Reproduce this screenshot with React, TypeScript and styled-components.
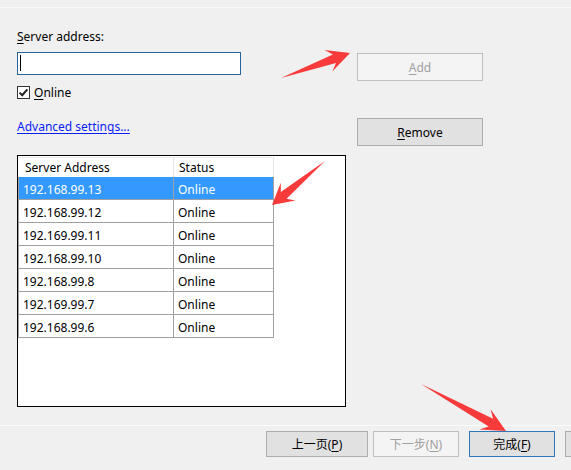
import React from "react";
import styled, { createGlobalStyle } from "styled-components";

const GlobalStyle = createGlobalStyle`
  html, body {
    margin: 0;
    padding: 0;
    background: #f0f0f0;
  }
  body {
    font-family: "Noto Sans", "Noto Sans CJK SC", sans-serif;
    font-size: 12px;
    color: #000;
  }
`;

const Window = styled.div`
  position: relative;
  width: 571px;
  height: 470px;
  overflow: hidden;
  background: #f0f0f0;
  display: flex;
  flex-direction: column;
`;

const TopEdge = styled.div`
  flex: none;
  height: 7px;
  border-bottom: 1px solid #f8f8f8;
`;

const Content = styled.div`
  flex: 1;
  display: grid;
  grid-template-columns: 329px 126px;
  column-gap: 11px;
  padding-left: 17px;
  align-items: start;
`;

const LeftColumn = styled.div`
  display: flex;
  flex-direction: column;
`;

const RightColumn = styled.div`
  display: flex;
  flex-direction: column;
`;

const Label = styled.div`
  margin-top: 21px;
  line-height: 16px;
  height: 16px;
`;

const Key = styled.span`
  text-decoration: underline;
  text-underline-offset: 2px;
`;

const TextBox = styled.div`
  margin-top: 7px;
  width: 224px;
  height: 23px;
  box-sizing: border-box;
  background: #fff;
  border: 1px solid #2a6397;
  padding: 2px 0 0 2px;
`;

const Caret = styled.div`
  width: 1px;
  height: 16px;
  background: #000;
`;

const CheckRow = styled.label`
  margin-top: 11px;
  height: 13px;
  display: flex;
  align-items: center;
  gap: 4px;
  line-height: 13px;
`;

const CheckBox = styled.span`
  width: 13px;
  height: 13px;
  box-sizing: border-box;
  border: 1px solid #333;
  background: #fff;
  display: flex;
  align-items: center;
  justify-content: center;
`;

const Link = styled.a`
  margin-top: 20px;
  line-height: 16px;
  height: 16px;
  color: #0a1ef5;
  text-decoration: underline;
  text-underline-offset: 2px;
  align-self: flex-start;
  cursor: pointer;
`;

const ListBox = styled.div`
  margin-top: 20px;
  width: 329px;
  height: 252px;
  box-sizing: border-box;
  border: 1px solid #000;
  background: #fff;
  padding-top: 1px;
`;

const Table = styled.div`
  width: 256px;
`;

const HeaderRow = styled.div`
  display: grid;
  grid-template-columns: 156px 100px;
  height: 20px;
  box-sizing: border-box;
  border-top: 1px solid #ececec;
`;

const HeaderCell = styled.div<{ $pad: number }>`
  padding-left: ${(p) => p.$pad}px;
  line-height: 19px;
  border-right: 1px solid #e5e5e5;
`;

const Row = styled.div<{ $selected?: boolean }>`
  display: grid;
  grid-template-columns: 155px 100px;
  height: 23px;
  box-sizing: border-box;
  border-left: 1px solid #a0a0a0;
  border-bottom: 1px solid #a0a0a0;
  background: ${(p) => (p.$selected ? "#3399ff" : "#fff")};
  color: ${(p) => (p.$selected ? "#fff" : "#000")};
`;

const Cell = styled.div`
  display: flex;
  align-items: center;
  box-sizing: border-box;
  padding: 3px 0 0 4px;
  border-right: 1px solid #a0a0a0;
  white-space: nowrap;
`;

const Button = styled.div<{
  $disabled?: boolean;
  $default?: boolean;
  $width?: number;
  $height?: number;
}>`
  flex: none;
  width: ${(p) => p.$width ?? 126}px;
  height: ${(p) => p.$height ?? 28}px;
  box-sizing: border-box;
  display: flex;
  align-items: center;
  justify-content: center;
  border: 1px solid
    ${(p) => (p.$disabled ? "#bfbfbf" : p.$default ? "#2f78b8" : "#adadad")};
  background: ${(p) => (p.$disabled ? "#f4f4f4" : "#e1e1e1")};
  color: ${(p) => (p.$disabled ? "#a0a0a0" : "#000")};
  font-family: "Noto Sans", "Noto Sans CJK SC", sans-serif;
  font-size: 12px;
  white-space: nowrap;
`;

const AddButton = styled(Button)`
  margin-top: 45px;
`;

const RemoveButton = styled(Button)`
  margin-top: 37px;
`;

const Footer = styled.div`
  flex: none;
  height: 45px;
  box-sizing: border-box;
  border-top: 1px solid #fbfbfb;
  padding: 5px 0 0 266px;
  display: flex;
  align-items: flex-start;
`;

const Gap = styled.div<{ $w: number }>`
  flex: none;
  width: ${(p) => p.$w}px;
`;

const Overlay = styled.svg`
  position: absolute;
  left: 0;
  top: 0;
  width: 571px;
  height: 470px;
  pointer-events: none;
`;

type Pt = [number, number];

const arrowPoints = (tail: Pt, tip: Pt, head: number, wing: number, neck: number) => {
  const dx = tip[0] - tail[0];
  const dy = tip[1] - tail[1];
  const len = Math.hypot(dx, dy);
  const ux = dx / len;
  const uy = dy / len;
  const nx = -uy;
  const ny = ux;
  const at = (back: number, side: number): Pt => [
    tip[0] - ux * back + nx * side,
    tip[1] - uy * back + ny * side,
  ];
  const pts: Pt[] = [
    tail,
    at(head * 0.72, neck),
    at(head, wing),
    tip,
    at(head, -wing),
    at(head * 0.72, -neck),
  ];
  return pts.map((p) => p.map((v) => v.toFixed(1)).join(",")).join(" ");
};

const arrows: { tail: Pt; tip: Pt; head: number }[] = [
  { tail: [281, 78], tip: [350, 53], head: 23 },
  { tail: [325, 161], tip: [272, 205], head: 21 },
  { tail: [421, 384], tip: [506, 431], head: 24 },
];

const servers = [
  "192.168.99.13",
  "192.168.99.12",
  "192.169.99.11",
  "192.168.99.10",
  "192.168.99.8",
  "192.169.99.7",
  "192.168.99.6",
];

export default function App() {
  return (
    <Window>
      <GlobalStyle />
      <TopEdge />
      <Content>
        <LeftColumn>
          <Label>
            <Key>S</Key>erver address:
          </Label>
          <TextBox>
            <Caret />
          </TextBox>
          <CheckRow>
            <CheckBox>
              <svg width="11" height="11" viewBox="0 0 11 11">
                <path
                  d="M1.6 5.6 L4.2 8.2 L9.4 2.4"
                  fill="none"
                  stroke="#222"
                  strokeWidth="2"
                />
              </svg>
            </CheckBox>
            <span>
              <Key>O</Key>nline
            </span>
          </CheckRow>
          <Link>Advanced settings...</Link>
          <ListBox>
            <Table>
              <HeaderRow>
                <HeaderCell $pad={7}>Server Address</HeaderCell>
                <HeaderCell $pad={5}>Status</HeaderCell>
              </HeaderRow>
              {servers.map((ip, i) => (
                <Row key={ip + i} $selected={i === 0}>
                  <Cell>{ip}</Cell>
                  <Cell>Online</Cell>
                </Row>
              ))}
            </Table>
          </ListBox>
        </LeftColumn>
        <RightColumn>
          <AddButton $disabled>
            <Key>A</Key>dd
          </AddButton>
          <RemoveButton>
            <Key>R</Key>emove
          </RemoveButton>
        </RightColumn>
      </Content>
      <Footer>
        <Button $width={102} $height={26}>
          上一页(<Key>P</Key>)
        </Button>
        <Gap $w={5} />
        <Button $width={86} $height={26} $disabled>
          下一步(<Key>N</Key>)
        </Button>
        <Gap $w={10} />
        <Button $width={86} $height={26} $default>
          完成(<Key>F</Key>)
        </Button>
        <Gap $w={10} />
        <Button $width={86} $height={26} />
      </Footer>
      <Overlay viewBox="0 0 571 470">
        {arrows.map((a, i) => (
          <polygon
            key={i}
            points={arrowPoints(a.tail, a.tip, a.head, 11.5, 4.5)}
            fill="#f73b3b"
          />
        ))}
      </Overlay>
    </Window>
  );
}
